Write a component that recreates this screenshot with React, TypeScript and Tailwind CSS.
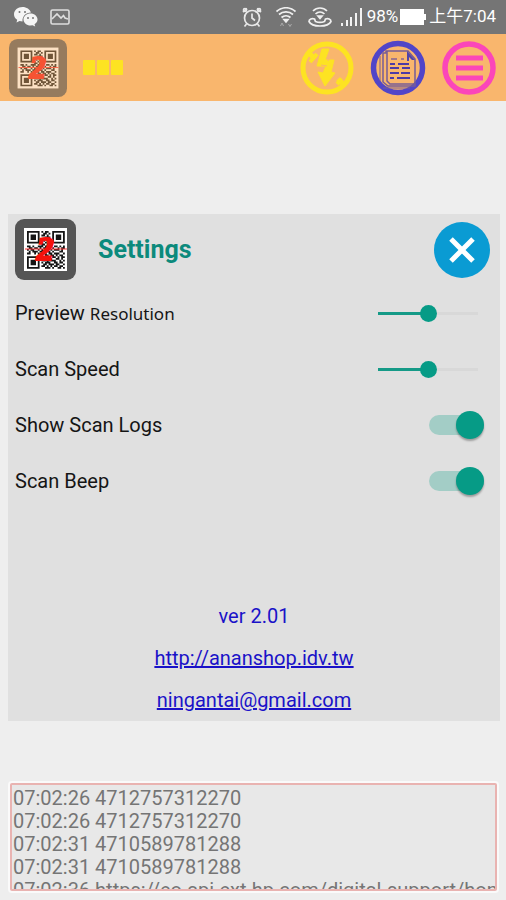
import React, { useState } from 'react';

const SCAN_LOGS = [
  '07:02:26 4712757312270',
  '07:02:26 4712757312270',
  '07:02:31 4710589781288',
  '07:02:31 4710589781288',
  '07:02:36 https://eo.api.ext.hp.com/digital-support/home',
];

const QR_ROWS = [
  '111111101011001111111',
  '100000100110101000001',
  '101110101101001011101',
  '101110100011101011101',
  '101110101110001011101',
  '100000100101101000001',
  '111111101010101111111',
  '000000001101100000000',
  '110100111011010110101',
  '011011010110101001011',
  '101100101011010111010',
  '010111011101101000110',
  '110010100110110111001',
  '000000001011011010110',
  '111111100101101101011',
  '100000101110110011010',
  '101110100101011100101',
  '101110101011100110110',
  '101110100110111011001',
  '100000101101010110110',
  '111111100011101001101',
];

const QR_PATH = QR_ROWS.map((row, y) =>
  row.split('').map((c, x) => (c === '1' ? `M${x} ${y}h1v1h-1z` : '')).join('')
).join('');

function QrLogo({ className }: { className: string }) {
  return (
    <svg viewBox="0 0 61 61" className={className} aria-hidden="true">
      <rect width="61" height="61" rx="9" fill="#555" />
      <rect x="9" y="9" width="43" height="43" fill="#fff" />
      <path d={QR_PATH} transform="translate(12 12) scale(1.8)" fill="#151515" />
      <path d="M10 30h42" stroke="#f33" strokeWidth="1" />
      <text x="30" y="41" textAnchor="middle" fontFamily="Liberation Serif, serif" fontSize="34"
        fontWeight="bold" fontStyle="italic" fill="#f5120c" stroke="#f5120c" strokeWidth="2">2</text>
    </svg>
  );
}

function StatusBar() {
  return (
    <div className="flex h-[34px] items-center bg-[#757575] pl-[14px] pr-[10px] text-[17px] text-white">
      <svg width="24" height="20" viewBox="0 0 24 20" fill="#f5f5f5" aria-hidden="true">
        <path d="M8.500 0C3.800 0 0 3.200 0 7.200c0 2.300 1.200 4.200 3.200 5.500L2.500 15.500l3-1.600 3 .5C8 9.500 12 5.500 17 5.600 16 2.300 12.600 0 8.500 0z" />
        <path d="M16.500 6.500c-3.900 0-7 2.700-7 6s3.100 6 7 6l2-.3 2.700 1.400-.7-2.400c1.800-1.100 3-2.800 3-4.700 0-3.300-3.100-6-7-6z" />
        <g fill="#757575">
          <circle cx="5.500" cy="5" r="1" /><circle cx="11" cy="5" r="1" />
          <circle cx="14" cy="11" r="1" /><circle cx="19" cy="11" r="1" />
        </g>
      </svg>
      <svg className="ml-3" width="20" height="16" viewBox="0 0 20 16" fill="none" stroke="#dedede" strokeWidth="1.600" aria-hidden="true">
        <rect x="1" y="1" width="18" height="14" rx="1.500" />
        <path d="M2 10l5-5 4 4 2.500-2.500L15 9l3 1" />
      </svg>

      <div className="ml-auto flex items-center">
        <svg width="20" height="21" viewBox="0 0 20 21" fill="none" stroke="#e8e8e8" strokeWidth="1.700" aria-hidden="true">
          <circle cx="10" cy="11" r="7.500" />
          <path d="M10 6.500V11l3 2.500M1 5l4-3.500M19 5l-4-3.500M4.500 17l-2 2.500M15.500 17l2 2.500" />
          <circle cx="3" cy="3" r="1.500" /><circle cx="17" cy="3" r="1.500" />
        </svg>
        <svg className="ml-[14px]" width="20" height="20" viewBox="0 0 20 20" fill="none" stroke="#efefef" strokeWidth="1.700" aria-hidden="true">
          <path d="M.500 4.500c5.500-5 13.500-5 19 0M3 7.500c4-3.600 10-3.600 14 0M5.500 10.500c2.600-2.300 6.400-2.300 9 0" />
          <path d="M8 12.500h4l-2 2.500z" fill="#efefef" />
          <path d="M4.500 19l1.500-3 1.500 3M12.500 17l1.500 2.500 1.500-2.500" stroke="#aaa" strokeWidth="1" />
        </svg>
        <svg className="ml-3" width="24" height="20" viewBox="0 0 24 20" fill="none" stroke="#efefef" strokeWidth="1.700" aria-hidden="true">
          <path d="M5 4c4-4 10-4 14 0M7.500 7c2.600-2.500 6.400-2.500 9 0" />
          <path d="M10 9h4l-2 2.500z" fill="#efefef" />
          <path d="M1 14.500c0-2.500 3-3.500 5.500-2.500l1 2.500c3 1.300 6 1.300 9 0l1-2.500c2.500-1 5.500 0 5.500 2.500-1 2-4 4.500-11 4.500S2 16.500 1 14.500z" />
        </svg>
        <svg className="ml-[9px]" width="22" height="18" viewBox="0 0 22 18" fill="#f2f2f2" aria-hidden="true">
          <path d="M0 15h2v3H0zM5 12h2v6H5zM9 9h2v9H9zM14 5h2v13h-2zM19 0h2v18h-2z" />
        </svg>
        <span className="ml-1">98%</span>
        <svg className="ml-[2px]" width="27" height="16" viewBox="0 0 27 16" fill="#fff" aria-hidden="true">
          <path d="M0 0h24v5h2v6h-2v5H0z" />
        </svg>
        <span className="ml-[2px]">上午7:04</span>
      </div>
    </div>
  );
}

function FlashOffIcon() {
  return (
    <svg width="54" height="54" viewBox="0 0 54 54" fill="none" stroke="#fde322" aria-hidden="true">
      <circle cx="27" cy="27" r="24" strokeWidth="5" />
      <path d="M8 11l7 7M38 38l7 7" strokeWidth="5" />
      <path d="M10 21l7-8M37 43l5-5" strokeWidth="4" />
      <path d="M22 8h7l-4 11h9l-3 12 4 1-10 13-7-14 5 1 3-7h-9z" fill="#fde322" strokeWidth="1" />
      <path d="M31 12l-3 8M21 24l6 1" stroke="#f9b66d" strokeWidth="1" />
    </svg>
  );
}

function LogIcon() {
  return (
    <svg width="56" height="56" viewBox="0 0 56 56" fill="none" stroke="#5145c8" aria-hidden="true">
      <circle cx="28" cy="28" r="24.500" strokeWidth="5.500" />
      <g stroke="#765c96" strokeWidth="1.500">
        <path d="M16 11h22l7 8v27H18l-5-4V13h3z" />
        <path d="M17 11v30l3 3h25" />
        <path d="M10 16v25M13 48h27" strokeWidth="1" />
      </g>
      <path d="M37 11l8 9h-3l-3-3v4h-2z" fill="#5145a8" stroke="none" />
      <g stroke="#4d3aa6" strokeWidth="1.800">
        <path d="M21 19h6M31 19h3" strokeWidth="1" />
        <path d="M20 24h5M28 24h11M20 28h9M32 28h8M20 33h9M31 33h9M20 38h4M27 38h13" />
      </g>
    </svg>
  );
}

function MenuIcon() {
  return (
    <svg width="54" height="54" viewBox="0 0 54 54" fill="none" stroke="#fb46b9" aria-hidden="true">
      <circle cx="27" cy="27" r="24" strokeWidth="5.500" />
      <path d="M14 17h27M14 27h27M14 37h27" strokeWidth="5" />
    </svg>
  );
}

function Slider({ id, label, value, onChange }: { id: string; label: React.ReactNode; value: number; onChange: (v: number) => void }) {
  return (
    <div className="flex h-14 items-center justify-between pl-[7px] pr-[22px]">
      <label htmlFor={id}>{label}</label>
      <input id={id} type="range" min={0} max={100} value={value}
        onChange={(e) => onChange(parseInt(e.target.value))}
        style={{ '--fill': `${value}%` } as React.CSSProperties}
        className="h-[17px] w-[100px] appearance-none bg-transparent [&::-webkit-slider-runnable-track]:h-[3px] [&::-webkit-slider-runnable-track]:bg-[linear-gradient(to_right,#159a87_var(--fill),#d8d8d8_var(--fill))] [&::-webkit-slider-thumb]:-mt-[7px] [&::-webkit-slider-thumb]:h-[17px] [&::-webkit-slider-thumb]:w-[17px] [&::-webkit-slider-thumb]:appearance-none [&::-webkit-slider-thumb]:rounded-full [&::-webkit-slider-thumb]:bg-[#069b86]" />
    </div>
  );
}

function Toggle({ id, label, checked, onChange }: { id: string; label: string; checked: boolean; onChange: (v: boolean) => void }) {
  return (
    <div className="flex h-14 items-center justify-between pl-[7px] pr-4">
      <label htmlFor={id}>{label}</label>
      <input id={id} type="checkbox" role="switch" checked={checked}
        onChange={(e) => onChange(e.target.checked)}
        className="relative h-5 w-[55px] appearance-none rounded-full bg-[#bdbdbd] checked:bg-[#a3cdc6] after:absolute after:-top-1 after:left-0 after:h-7 after:w-7 after:rounded-full after:bg-white after:shadow-[0_2px_2px_rgba(0,0,0,0.3)] checked:after:left-auto checked:after:right-0 checked:after:bg-[#069b86]" />
    </div>
  );
}

export default function App() {
  const [resolution, setResolution] = useState(50);
  const [speed, setSpeed] = useState(50);
  const [showLogs, setShowLogs] = useState(true);
  const [beep, setBeep] = useState(true);

  return (
    <div className="flex min-h-screen flex-col bg-[#eeeeee] font-['Roboto','Noto_Sans_CJK_TC',sans-serif]">
      <StatusBar />

      <header className="flex h-[67px] items-center bg-[#f9b66d] pl-[9px] pr-[10px]">
        <QrLogo className="h-[58px] w-[58px] opacity-60" />
        <div className="ml-4 flex gap-[2px]">
          <span className="h-[15px] w-3 rounded-[1px] bg-[#fde322]" />
          <span className="h-[15px] w-3 rounded-[1px] bg-[#fde322]" />
          <span className="h-[15px] w-3 rounded-[1px] bg-[#fde322]" />
        </div>
        <div className="ml-auto flex items-center gap-4">
          <button aria-label="Flash"><FlashOffIcon /></button>
          <button aria-label="Logs"><LogIcon /></button>
          <button aria-label="Menu"><MenuIcon /></button>
        </div>
      </header>

      <main className="mt-[113px] mr-[6px] ml-2 bg-[#e0e0e0] text-xl text-[#151515]">
        <div className="flex h-[71px] items-center pl-[7px] pr-[10px]">
          <QrLogo className="h-[61px] w-[61px]" />
          <h1 className="ml-[22px] text-[25px] font-bold text-[#0c8a7c]">Settings</h1>
          <button aria-label="Close" className="ml-auto flex h-14 w-14 items-center justify-center rounded-full bg-[#0a9bd3]">
            <svg width="26" height="26" viewBox="0 0 26 26" stroke="#fff" strokeWidth="5" aria-hidden="true">
              <path d="M2 2l22 22M24 2L2 24" />
            </svg>
          </button>
        </div>

        <Slider id="resolution" value={resolution} onChange={setResolution}
          label={<>Preview <span className="font-['Noto_Sans',sans-serif] text-[17px]">Resolution</span></>} />
        <Slider id="speed" label="Scan Speed" value={speed} onChange={setSpeed} />
        <Toggle id="show-logs" label="Show Scan Logs" checked={showLogs} onChange={setShowLogs} />
        <Toggle id="beep" label="Scan Beep" checked={beep} onChange={setBeep} />

        <div className="mt-[86px] flex flex-col items-center leading-[42px] text-[#1a12c8]">
          <p>ver 2.01</p>
          <a href="http://ananshop.idv.tw" className="underline">http://ananshop.idv.tw</a>
          <a href="mailto:ningantai@gmail.com" className="underline">ningantai@gmail.com</a>
        </div>
      </main>

      <ul className="mr-[9px] ml-[10px] mt-[62px] mb-2 h-[108px] overflow-hidden rounded-[2px] border-2 border-[#e9b3b1] bg-[#e8e8e8] px-px pt-[2px] text-xl leading-[23px] text-[#757575] ring-2 ring-[#fafafa]">
        {SCAN_LOGS.map((line, i) => (
          <li key={i} className="whitespace-nowrap">{line}</li>
        ))}
      </ul>
    </div>
  );
}
